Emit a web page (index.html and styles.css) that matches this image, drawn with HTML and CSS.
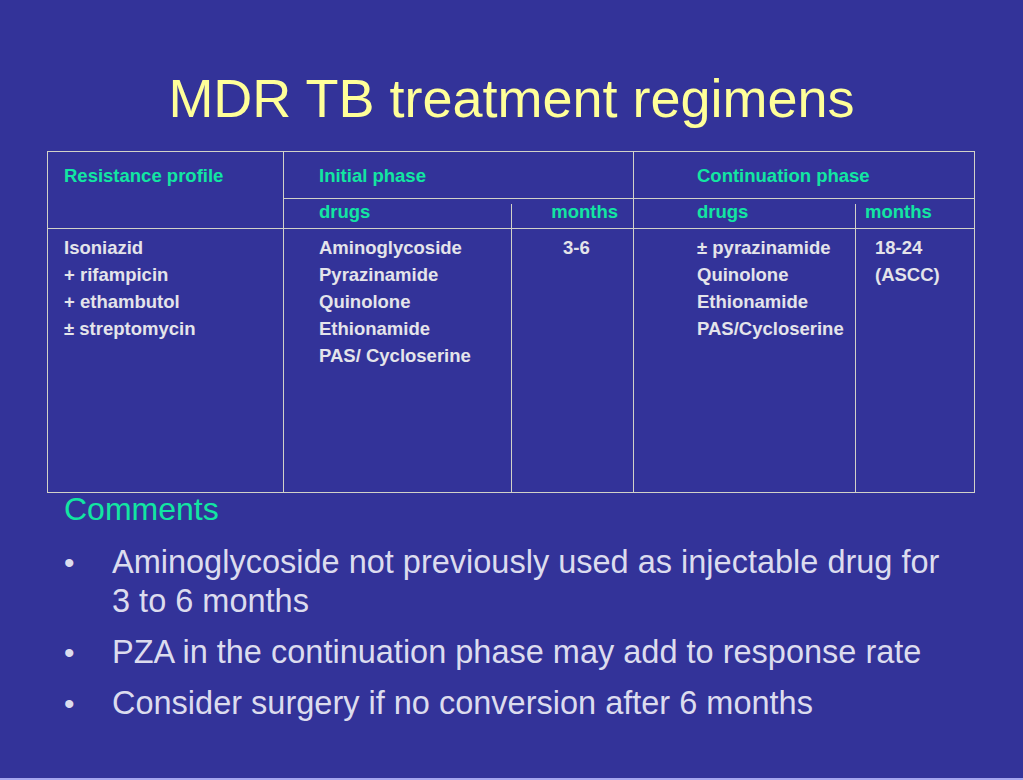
FILE: index.html
```html
<!DOCTYPE html>
<html lang="en">
<head>
<meta charset="utf-8">
<title>MDR TB treatment regimens</title>
<link rel="stylesheet" href="styles.css">
</head>
<body>
<div class="slide">
  <h1 class="title">MDR TB treatment regimens</h1>
  <div class="regimen-table">
    <div class="cell head profile">Resistance profile</div>
    <div class="cell head phase initial">Initial phase</div>
    <div class="cell head phase cont">Continuation phase</div>
    <div class="cell head sub drugs-i">drugs</div>
    <div class="cell head sub months-i">months</div>
    <div class="cell head sub drugs-c">drugs</div>
    <div class="cell head sub months-c">months</div>
    <div class="cell body b-profile">Isoniazid<br>+ rifampicin<br>+ ethambutol<br>± streptomycin</div>
    <div class="cell body b-drugs-i">Aminoglycoside<br>Pyrazinamide<br>Quinolone<br>Ethionamide<br>PAS/ Cycloserine</div>
    <div class="cell body b-months-i">3-6</div>
    <div class="cell body b-drugs-c">± pyrazinamide<br>Quinolone<br>Ethionamide<br>PAS/Cycloserine</div>
    <div class="cell body b-months-c">18-24<br>(ASCC)</div>
  </div>
  <div class="comments">Comments</div>
  <ul class="bullets">
    <li><span class="dot">•</span><span class="txt">Aminoglycoside not previously used as injectable drug for 3 to 6 months</span></li>
    <li><span class="dot">•</span><span class="txt">PZA in the continuation phase may add to response rate</span></li>
    <li><span class="dot">•</span><span class="txt">Consider surgery if no conversion after 6 months</span></li>
  </ul>
</div>
</body>
</html>
```

FILE: styles.css
```css
html, body {
  margin: 0;
  padding: 0;
  background: #333399;
}

.slide {
  width: 1023px;
  height: 778px;
  border-bottom: 2px solid #a6a6ee;
  background: #333399;
  font-family: "Liberation Sans", Arial, sans-serif;
  overflow: hidden;
  display: flex;
  flex-direction: column;
}

.title {
  margin: 67px 0 0 0;
  font-size: 54px;
  line-height: 62px;
  font-weight: normal;
  color: #ffff99;
  text-align: center;
}

.regimen-table {
  margin: 22px 0 0 47px;
  width: 926px;
  border: 1px solid #d2d2c8;
  display: grid;
  grid-template-columns: 235px 228px 122px 222px 119px;
  grid-template-rows: 46px 30px 264px;
  font-size: 18.5px;
  font-weight: bold;
  line-height: 27px;
}

.cell {
  box-sizing: border-box;
}

.head {
  color: #12e6a2;
}

.profile {
  grid-column: 1;
  grid-row: 1 / span 2;
  padding: 10px 0 0 16px;
}

.phase {
  grid-row: 1;
  padding-top: 10px;
  border-left: 1px solid #d2d2c8;
}

.initial {
  grid-column: 2 / span 2;
  padding-left: 35px;
}

.cont {
  grid-column: 4 / span 2;
  padding-left: 63px;
}

.sub {
  grid-row: 2;
  border-top: 1px solid #d2d2c8;
  line-height: 26px;
}

.drugs-i {
  grid-column: 2;
  border-left: 1px solid #d2d2c8;
  padding-left: 35px;
}

.months-i {
  grid-column: 3;
  text-align: right;
  padding-right: 15px;
  background: linear-gradient(#d2d2c8, #d2d2c8) no-repeat left 5px / 1px calc(100% - 5px);
}

.drugs-c {
  grid-column: 4;
  border-left: 1px solid #d2d2c8;
  padding-left: 63px;
}

.months-c {
  grid-column: 5;
  padding-left: 10px;
  background: linear-gradient(#d2d2c8, #d2d2c8) no-repeat left 5px / 1px calc(100% - 5px);
}

.body {
  grid-row: 3;
  border-top: 1px solid #d2d2c8;
  color: #e4e4ea;
  padding-top: 5px;
}

.b-profile {
  grid-column: 1;
  padding-left: 16px;
}

.b-drugs-i {
  grid-column: 2;
  border-left: 1px solid #d2d2c8;
  padding-left: 35px;
}

.b-months-i {
  grid-column: 3;
  border-left: 1px solid #d2d2c8;
  padding-left: 51px;
}

.b-drugs-c {
  grid-column: 4;
  border-left: 1px solid #d2d2c8;
  padding-left: 63px;
}

.b-months-c {
  grid-column: 5;
  border-left: 1px solid #d2d2c8;
  padding-left: 19px;
}

.comments {
  margin: 0 0 0 64px;
  font-size: 32px;
  line-height: 32px;
  color: #12e6a2;
}

.bullets {
  list-style: none;
  margin: 18px 0 0 64px;
  padding: 0;
  width: 891px;
  font-size: 32.5px;
  line-height: 39px;
  color: #dcdcee;
}

.bullets li {
  display: grid;
  grid-template-columns: 48px 1fr;
  margin-bottom: 12px;
}

.dot {
  font-size: 30px;
}
```
